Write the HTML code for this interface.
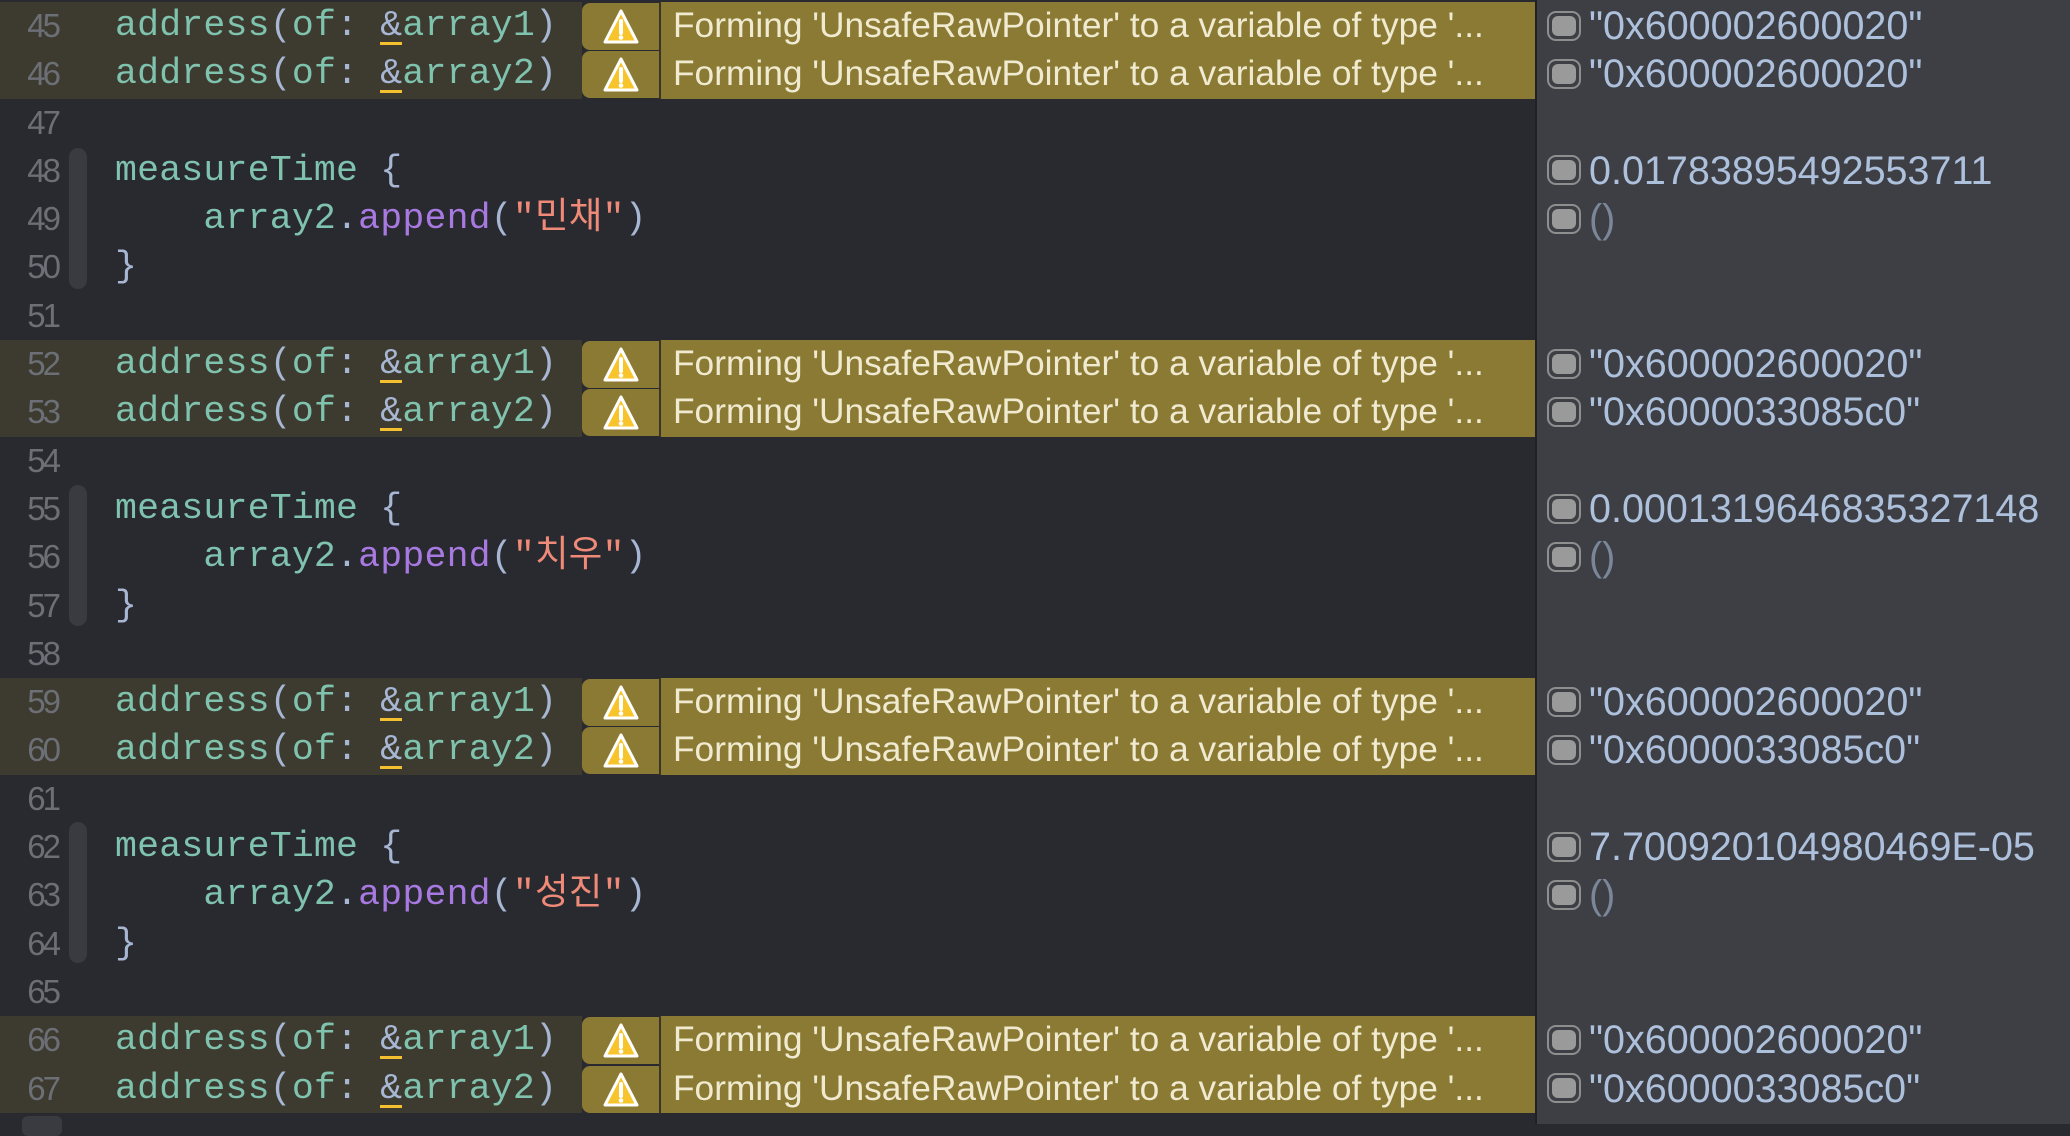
<!DOCTYPE html>
<html><head><meta charset="utf-8"><style>
html,body{margin:0;padding:0}
body{width:2070px;height:1124px;background:#292a30;position:relative;overflow:hidden;font-family:"Liberation Mono",monospace}
#rp{position:absolute;left:1535px;top:0;width:535px;height:1124px;background:#3e3f44;border-left:2px solid #202125}
#lines{position:absolute;left:0;top:2px;width:2070px}
.l{position:relative;height:48.3px;line-height:48.3px}
.n{position:absolute;left:0;width:58px;text-align:right;color:#6c6f75;font-size:33px;letter-spacing:-3px;font-family:"Liberation Sans Narrow","Liberation Sans",sans-serif}
.c{position:absolute;left:115px;font-size:36.5px;color:#7fc2ae;white-space:pre;letter-spacing:0.2px}
.p{color:#a7b6d3}.s{color:#ef8a78;font-family:"Liberation Mono","Noto Sans CJK KR",monospace}.m{color:#a879e0}
.amp{color:#a7b6d3;border-bottom:3px solid #f5c02f;line-height:32px;display:inline-block}
.hl{position:absolute;left:0;top:0;width:582px;height:48.3px;background:#3d3a2f}
.bd{position:absolute;left:582px;top:1px;width:77px;height:47px;background:#8b7a33;border-radius:8px 0 0 8px}
.sep{position:absolute;left:659px;top:0;width:2px;height:48.3px;background:#3a3527}
.msg{position:absolute;left:661px;top:0;width:874px;height:48.3px;background:#8b7a33;color:#efead0;font-family:"Liberation Sans",sans-serif;font-size:35.3px;text-indent:12px;white-space:nowrap}
.bd svg{position:absolute;left:20px;top:5px}
.v{position:absolute;left:1547px;font-family:"Liberation Sans",sans-serif;font-size:39.5px;color:#adc0dc;white-space:nowrap}
.v.g{color:#7b8799}
.cb{display:inline-block;width:30px;height:26px;border:2.5px solid #8e8e8e;border-radius:9px;background:#3e3f44;vertical-align:middle;position:relative;margin-right:8px;top:-3px}
.cb:after{content:"";position:absolute;left:3px;top:3px;right:3px;bottom:3px;background:#9a9a9a;border-radius:6px}
.fold{position:absolute;left:69px;width:18px;background:#3a3b41;border-radius:9px}
</style></head><body>
<div id="rp"></div>
<div class="fold" style="top:148px;height:141px"></div>
<div class="fold" style="top:485px;height:141px"></div>
<div class="fold" style="top:822px;height:141px"></div>
<div style="position:absolute;left:22px;top:1116px;width:40px;height:20px;background:#3a3b40;border-radius:6px"></div>
<div id="lines">
<div class="l"><div class="hl"></div><div class="bd"><svg width="38" height="38" viewBox="0 0 38 38"><path d="M19 3 L35 34 L3 34 Z" fill="#f7c42c" stroke="#fff" stroke-width="3" stroke-linejoin="round"/><path d="M19 13 V25" stroke="#fff" stroke-width="4" stroke-linecap="round"/><circle cx="19" cy="29.5" r="2.3" fill="#fff"/></svg></div><div class="sep"></div><div class="msg">Forming 'UnsafeRawPointer' to a variable of type '...</div><span class="n">45</span><span class="c">address<span class="p">(</span>of<span class="p">:</span> <span class="amp">&amp;</span>array1<span class="p">)</span></span><span class="v"><span class="cb"></span>"0x600002600020"</span></div>
<div class="l"><div class="hl"></div><div class="bd"><svg width="38" height="38" viewBox="0 0 38 38"><path d="M19 3 L35 34 L3 34 Z" fill="#f7c42c" stroke="#fff" stroke-width="3" stroke-linejoin="round"/><path d="M19 13 V25" stroke="#fff" stroke-width="4" stroke-linecap="round"/><circle cx="19" cy="29.5" r="2.3" fill="#fff"/></svg></div><div class="sep"></div><div class="msg">Forming 'UnsafeRawPointer' to a variable of type '...</div><span class="n">46</span><span class="c">address<span class="p">(</span>of<span class="p">:</span> <span class="amp">&amp;</span>array2<span class="p">)</span></span><span class="v"><span class="cb"></span>"0x600002600020"</span></div>
<div class="l"><span class="n">47</span></div>
<div class="l"><span class="n">48</span><span class="c">measureTime <span class="p">{</span></span><span class="v"><span class="cb"></span>0.01783895492553711</span></div>
<div class="l"><span class="n">49</span><span class="c">    array2<span class="p">.</span><span class="m">append</span><span class="p">(</span><span class="s">"민채"</span><span class="p">)</span></span><span class="v g"><span class="cb"></span>()</span></div>
<div class="l"><span class="n">50</span><span class="c"><span class="p">}</span></span></div>
<div class="l"><span class="n">51</span></div>
<div class="l"><div class="hl"></div><div class="bd"><svg width="38" height="38" viewBox="0 0 38 38"><path d="M19 3 L35 34 L3 34 Z" fill="#f7c42c" stroke="#fff" stroke-width="3" stroke-linejoin="round"/><path d="M19 13 V25" stroke="#fff" stroke-width="4" stroke-linecap="round"/><circle cx="19" cy="29.5" r="2.3" fill="#fff"/></svg></div><div class="sep"></div><div class="msg">Forming 'UnsafeRawPointer' to a variable of type '...</div><span class="n">52</span><span class="c">address<span class="p">(</span>of<span class="p">:</span> <span class="amp">&amp;</span>array1<span class="p">)</span></span><span class="v"><span class="cb"></span>"0x600002600020"</span></div>
<div class="l"><div class="hl"></div><div class="bd"><svg width="38" height="38" viewBox="0 0 38 38"><path d="M19 3 L35 34 L3 34 Z" fill="#f7c42c" stroke="#fff" stroke-width="3" stroke-linejoin="round"/><path d="M19 13 V25" stroke="#fff" stroke-width="4" stroke-linecap="round"/><circle cx="19" cy="29.5" r="2.3" fill="#fff"/></svg></div><div class="sep"></div><div class="msg">Forming 'UnsafeRawPointer' to a variable of type '...</div><span class="n">53</span><span class="c">address<span class="p">(</span>of<span class="p">:</span> <span class="amp">&amp;</span>array2<span class="p">)</span></span><span class="v"><span class="cb"></span>"0x6000033085c0"</span></div>
<div class="l"><span class="n">54</span></div>
<div class="l"><span class="n">55</span><span class="c">measureTime <span class="p">{</span></span><span class="v"><span class="cb"></span>0.0001319646835327148</span></div>
<div class="l"><span class="n">56</span><span class="c">    array2<span class="p">.</span><span class="m">append</span><span class="p">(</span><span class="s">"치우"</span><span class="p">)</span></span><span class="v g"><span class="cb"></span>()</span></div>
<div class="l"><span class="n">57</span><span class="c"><span class="p">}</span></span></div>
<div class="l"><span class="n">58</span></div>
<div class="l"><div class="hl"></div><div class="bd"><svg width="38" height="38" viewBox="0 0 38 38"><path d="M19 3 L35 34 L3 34 Z" fill="#f7c42c" stroke="#fff" stroke-width="3" stroke-linejoin="round"/><path d="M19 13 V25" stroke="#fff" stroke-width="4" stroke-linecap="round"/><circle cx="19" cy="29.5" r="2.3" fill="#fff"/></svg></div><div class="sep"></div><div class="msg">Forming 'UnsafeRawPointer' to a variable of type '...</div><span class="n">59</span><span class="c">address<span class="p">(</span>of<span class="p">:</span> <span class="amp">&amp;</span>array1<span class="p">)</span></span><span class="v"><span class="cb"></span>"0x600002600020"</span></div>
<div class="l"><div class="hl"></div><div class="bd"><svg width="38" height="38" viewBox="0 0 38 38"><path d="M19 3 L35 34 L3 34 Z" fill="#f7c42c" stroke="#fff" stroke-width="3" stroke-linejoin="round"/><path d="M19 13 V25" stroke="#fff" stroke-width="4" stroke-linecap="round"/><circle cx="19" cy="29.5" r="2.3" fill="#fff"/></svg></div><div class="sep"></div><div class="msg">Forming 'UnsafeRawPointer' to a variable of type '...</div><span class="n">60</span><span class="c">address<span class="p">(</span>of<span class="p">:</span> <span class="amp">&amp;</span>array2<span class="p">)</span></span><span class="v"><span class="cb"></span>"0x6000033085c0"</span></div>
<div class="l"><span class="n">61</span></div>
<div class="l"><span class="n">62</span><span class="c">measureTime <span class="p">{</span></span><span class="v"><span class="cb"></span>7.700920104980469E-05</span></div>
<div class="l"><span class="n">63</span><span class="c">    array2<span class="p">.</span><span class="m">append</span><span class="p">(</span><span class="s">"성진"</span><span class="p">)</span></span><span class="v g"><span class="cb"></span>()</span></div>
<div class="l"><span class="n">64</span><span class="c"><span class="p">}</span></span></div>
<div class="l"><span class="n">65</span></div>
<div class="l"><div class="hl"></div><div class="bd"><svg width="38" height="38" viewBox="0 0 38 38"><path d="M19 3 L35 34 L3 34 Z" fill="#f7c42c" stroke="#fff" stroke-width="3" stroke-linejoin="round"/><path d="M19 13 V25" stroke="#fff" stroke-width="4" stroke-linecap="round"/><circle cx="19" cy="29.5" r="2.3" fill="#fff"/></svg></div><div class="sep"></div><div class="msg">Forming 'UnsafeRawPointer' to a variable of type '...</div><span class="n">66</span><span class="c">address<span class="p">(</span>of<span class="p">:</span> <span class="amp">&amp;</span>array1<span class="p">)</span></span><span class="v"><span class="cb"></span>"0x600002600020"</span></div>
<div class="l"><div class="hl"></div><div class="bd"><svg width="38" height="38" viewBox="0 0 38 38"><path d="M19 3 L35 34 L3 34 Z" fill="#f7c42c" stroke="#fff" stroke-width="3" stroke-linejoin="round"/><path d="M19 13 V25" stroke="#fff" stroke-width="4" stroke-linecap="round"/><circle cx="19" cy="29.5" r="2.3" fill="#fff"/></svg></div><div class="sep"></div><div class="msg">Forming 'UnsafeRawPointer' to a variable of type '...</div><span class="n">67</span><span class="c">address<span class="p">(</span>of<span class="p">:</span> <span class="amp">&amp;</span>array2<span class="p">)</span></span><span class="v"><span class="cb"></span>"0x6000033085c0"</span></div>
</div>
</body></html>
